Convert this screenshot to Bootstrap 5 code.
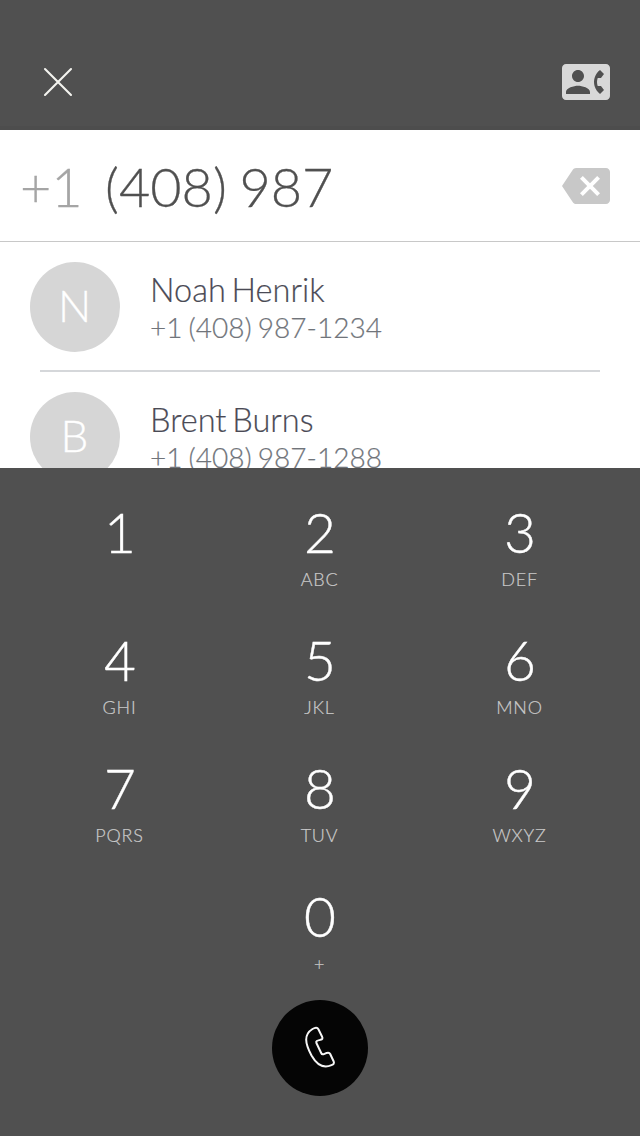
<!DOCTYPE html>
<html lang="en">
<head>
<meta charset="utf-8">
<meta name="viewport" content="width=device-width, initial-scale=1">
<title>Dialer</title>
<link href="https://cdn.jsdelivr.net/npm/bootstrap@5.3.0/dist/css/bootstrap.min.css" rel="stylesheet">
<style>
body { font-family: Lato, sans-serif; font-weight: 300; background: #505050; }
.dialer { width: 640px; height: 1136px; background: #505050; }
.topbar { height: 130px; padding: 38px 30px 0; border-bottom: 4px solid #4d4d4d; }
.close-btn { margin-left: 13px; }
.number-row { height: 112px; padding: 0 30px 0 20px; border-bottom: 1px solid #c8c8c8; }
.number { font-size: 54px; line-height: 64px; color: #505050; word-spacing: -2px; padding-top: 3px; -webkit-text-stroke: .3px currentColor; }
.prefix { color: #a5a5a5; width: 85px; }
.contacts { height: 226px; }
.contact { height: 130px; padding: 20px 30px 0; gap: 30px; }
.contact + .contact::before { content: ""; position: absolute; top: -2px; left: 40px; right: 40px; height: 2px; background: #d5d7da; }
.avatar { width: 90px; height: 90px; background: #d6d6d6; font-size: 44px; line-height: 1; padding: 0 1px 4px 0; -webkit-text-stroke: .3px currentColor; }
.who { font-size: 32.5px; line-height: 38px; color: #4a4a55; padding: 9px 0 0; word-spacing: -3px; -webkit-text-stroke: .2px currentColor; }
.tel { font-size: 28px; line-height: 37px; color: #70747a; word-spacing: -1.5px; -webkit-text-stroke: .2px currentColor; }
.keypad { padding: 30px 20px 0; height: 532px; }
.key { height: 128px; }
.digit { font-size: 55px; line-height: 68px; -webkit-text-stroke: .4px currentColor; }
.letters { font-size: 18px; line-height: 26px; color: #cbcbcb; letter-spacing: .8px; margin-right: 1px; -webkit-text-stroke: .2px currentColor; }
.call { width: 96px; height: 96px; background: #050505; }
</style>
</head>
<body>
<main class="dialer d-flex flex-column overflow-hidden">
  <header class="topbar d-flex align-items-center justify-content-between flex-shrink-0">
    <button class="close-btn btn p-0 border-0 lh-1" aria-label="Close">
      <svg class="d-block" width="30" height="30" fill="none" stroke="#f4f4ef" stroke-width="2.1" stroke-linecap="round"><path d="M2 2 28 28M28 2 2 28"/></svg>
    </button>
    <button class="btn p-0 border-0" aria-label="Contacts">
      <svg class="d-block" width="48" height="48" viewBox="0 0 24 24" fill="#d8d8d8"><path d="M22 3H2C.9 3 0 3.9 0 5v14c0 1.1.9 2 2 2h20c1.1 0 1.99-.9 1.99-2L24 5c0-1.1-.9-2-2-2zM8 6c1.66 0 3 1.34 3 3s-1.34 3-3 3-3-1.34-3-3 1.34-3 3-3zm6 12H2v-1c0-2 4-3.1 6-3.1s6 1.1 6 3.1v1zm3.85-4h1.64L21 16l-1.99 1.99c-1.31-.98-2.28-2.38-2.73-3.99-.18-.64-.28-1.31-.28-2s.1-1.36.28-2c.45-1.62 1.42-3.01 2.73-3.99L21 8l-1.51 2h-1.64c-.22.63-.35 1.3-.35 2s.13 1.37.35 2z"/></svg>
    </button>
  </header>
  <section class="number-row bg-white d-flex align-items-center justify-content-between flex-shrink-0">
    <div class="number d-flex"><span class="prefix">+1</span><span>(408) 987</span></div>
    <button class="btn p-0 border-0" aria-label="Delete">
      <svg class="d-block" width="48" height="48" viewBox="0 0 24 24" fill="#c8c8c8"><path d="M22 3H7c-.69 0-1.23.35-1.59.88L0 12l5.41 8.11c.36.53.9.89 1.59.89h15c1.1 0 2-.9 2-2V5c0-1.1-.9-2-2-2zm-3 12.59L17.59 17 14 13.41 10.41 17 9 15.59 12.59 12 9 8.41 10.41 7 14 10.59 17.59 7 19 8.41 15.41 12 19 15.59z"/></svg>
    </button>
  </section>
  <section class="contacts bg-white overflow-hidden flex-shrink-0">
    <div class="contact position-relative d-flex align-items-start">
      <div class="avatar rounded-circle text-white d-flex align-items-center justify-content-center">N</div>
      <div class="flex-grow-1"><div class="who">Noah Henrik</div><div class="tel">+1 (408) 987-1234</div></div>
    </div>
    <div class="contact position-relative d-flex align-items-start">
      <div class="avatar rounded-circle text-white d-flex align-items-center justify-content-center">B</div>
      <div class="flex-grow-1"><div class="who">Brent Burns</div><div class="tel">+1 (408) 987-1288</div></div>
    </div>
  </section>
  <section class="keypad row g-0 text-center text-white flex-shrink-0">
    <div class="key col-4"><div class="digit">1</div></div>
    <div class="key col-4"><div class="digit">2</div><div class="letters">ABC</div></div>
    <div class="key col-4"><div class="digit">3</div><div class="letters">DEF</div></div>
    <div class="key col-4"><div class="digit">4</div><div class="letters">GHI</div></div>
    <div class="key col-4"><div class="digit">5</div><div class="letters">JKL</div></div>
    <div class="key col-4"><div class="digit">6</div><div class="letters">MNO</div></div>
    <div class="key col-4"><div class="digit">7</div><div class="letters">PQRS</div></div>
    <div class="key col-4"><div class="digit">8</div><div class="letters">TUV</div></div>
    <div class="key col-4"><div class="digit">9</div><div class="letters">WXYZ</div></div>
    <div class="key col-4 offset-4"><div class="digit">0</div><div class="letters">+</div></div>
  </section>
  <button class="call btn rounded-circle border-0 p-0 mx-auto flex-shrink-0" aria-label="Call">
    <svg class="d-block" width="96" height="96" fill="none" stroke="#f6f6f6" stroke-width="2" stroke-linejoin="round"><path d="M40.5 29C43 27.600 45.300 27 46.400 29.200L50 36.500C51 38.600 50.400 39.300 48.500 39.800C45 40.700 43.600 41 44.400 43L49.300 53.200C50 54.700 51 54.500 52.500 53.800C55.500 52.500 57.200 52 58.200 54L61.600 61.200C62.500 63.300 61.600 64.300 59.500 65.200C52.500 68.300 45.500 66 39.500 55.500C33 43.500 31.500 34.500 40.500 29Z"/></svg>
  </button>
</main>
<script src="https://cdn.jsdelivr.net/npm/bootstrap@5.3.0/dist/js/bootstrap.bundle.min.js"></script>
</body>
</html>
